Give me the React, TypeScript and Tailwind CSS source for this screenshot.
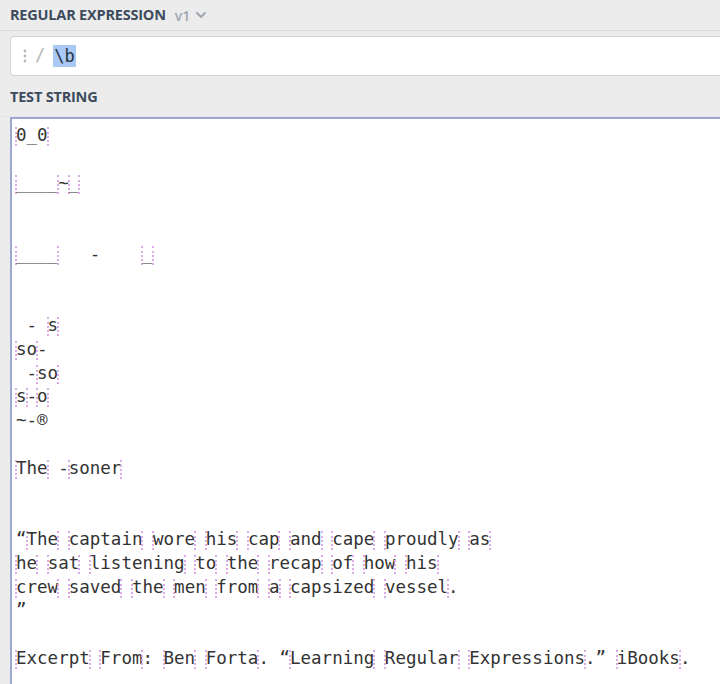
import { ChevronDown } from "lucide-react";

const testLines = [
  "0_0",
  "",
  "____~_",
  "",
  "",
  "____   -    _",
  "",
  "",
  " - s",
  "so-",
  " -so",
  "s-o",
  "~-®",
  "",
  "The -soner",
  "",
  "",
  "“The captain wore his cap and cape proudly as",
  "he sat listening to the recap of how his",
  "crew saved the men from a capsized vessel.",
  "”",
  "",
  "Excerpt From: Ben Forta. “Learning Regular Expressions.” iBooks.",
];

const isWord = (c?: string) => !!c && /\w/.test(c);

function Marker() {
  return (
    <span className="inline-block w-[2px] -mx-px h-[19px] align-[-5px] border-l-2 border-dotted border-[#dcaae8]" />
  );
}

function Line({ text }: { text: string }) {
  if (!text) return <div className="h-[23.77px]">&nbsp;</div>;
  const parts: React.ReactNode[] = [];
  let buf = "";
  for (let i = 0; i <= text.length; i++) {
    if (isWord(text[i - 1]) !== isWord(text[i])) {
      if (buf) parts.push(<span key={"t" + i}>{buf}</span>);
      buf = "";
      parts.push(<Marker key={"m" + i} />);
    }
    if (i < text.length) buf += text[i];
  }
  if (buf) parts.push(<span key="end">{buf}</span>);
  return <div className="h-[23.77px] whitespace-pre">{parts}</div>;
}

export default function App() {
  return (
    <div className="w-[720px] h-[684px] overflow-hidden bg-[#ececec] flex flex-col font-['Open_Sans',sans-serif]">
      <div className="h-[31px] shrink-0 flex items-center gap-[9px] pl-[10px] border-b border-[#dcdcdc]">
        <span className="text-[14.5px] font-bold text-[#3e4b5d] tracking-[-0.2px]">REGULAR EXPRESSION</span>
        <span className="flex items-center gap-[3px] text-[14px] font-semibold text-[#9ea6b0]">
          v1
          <ChevronDown size={16} strokeWidth={3} />
        </span>
      </div>
      <div className="pt-[5px] pl-[10px] shrink-0">
        <div className="h-[40px] bg-white border border-[#d2d2d2] border-r-0 rounded-l-[4px] flex items-center pl-[12px] gap-[8px] font-['DejaVu_Sans_Mono',monospace] text-[17px]">
          <svg width="4" height="16" viewBox="0 0 4 16" className="text-[#b9b9b9]">
            <circle cx="2" cy="3" r="1.4" fill="currentColor" />
            <circle cx="2" cy="8" r="1.4" fill="currentColor" />
            <circle cx="2" cy="13" r="1.4" fill="currentColor" />
          </svg>
          <span className="text-[#b5b5b5]">/</span>
          <span className="bg-[#a9c8f3] text-[#263445] px-px leading-[22px]">\b</span>
        </div>
      </div>
      <div className="h-[41px] shrink-0 flex items-center pl-[10px] pt-[1px] border-b border-[#e4e2ef]">
        <span className="text-[14.5px] font-bold text-[#3e4b5d] tracking-[-0.2px]">TEST STRING</span>
      </div>
      <div className="flex-1 ml-[10px] bg-white border-t-2 border-l-2 border-[#9ba8cf] pl-[4px] pt-[5px] font-['DejaVu_Sans_Mono',monospace] text-[17.5px] leading-[23.77px] text-[#333333]">
        {testLines.map((l, i) => (
          <Line key={i} text={l} />
        ))}
      </div>
    </div>
  );
}
